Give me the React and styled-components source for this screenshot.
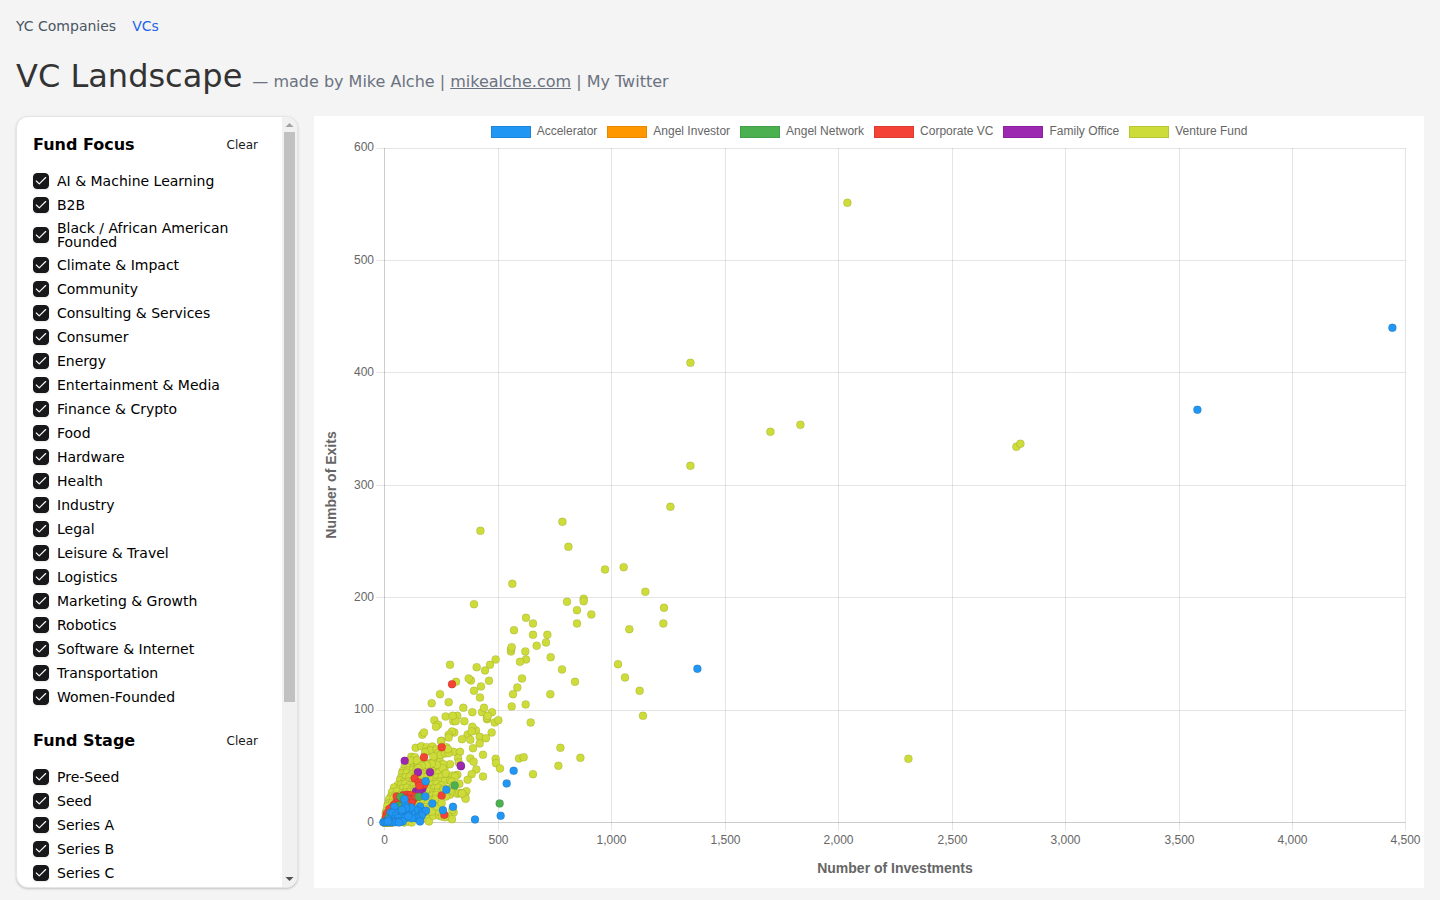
import React, { useState } from "react";
import styled, { createGlobalStyle } from "styled-components";
import { Check } from "lucide-react";

const focusOptions = [
    'AI & Machine Learning', 'B2B', 'Black / African American Founded', 'Climate & Impact',
    'Community', 'Consulting & Services', 'Consumer', 'Energy', 'Entertainment & Media',
    'Finance & Crypto', 'Food', 'Hardware', 'Health', 'Industry', 'Legal', 'Leisure & Travel',
    'Logistics', 'Marketing & Growth', 'Robotics', 'Software & Internet', 'Transportation',
    'Women-Founded',
];

const stageOptions = ['Pre-Seed', 'Seed', 'Series A', 'Series B', 'Series C'];

// Dots come in three layers: the whole plot (1 unit = 1px), then two
// closer ones near the origin (3 units = 1px).
const layers = {
    far: 'translate(-313.6 -138.2)',
    mid: 'translate(116 421.8) scale(0.33333)',
    near: 'translate(56 501.8) scale(0.33333)',
};

const series = [
    {
        name: 'Accelerator',
        color: '#2196f3',
        far: '1392 328,1197 410,697 669',
        near: '431 393,410 431,392 528,315 539,249 501,229 450,219 511,187 491,167 424,166 470,73 501,62 518,68 520,85 520,78 528,70 540,60 545,150 500,143 512,160 518,168 513,155 528,140 535,150 545,130 530,135 510,125 520,115 512,123 503,110 525,100 520,95 530,105 535,105 495,108 505,96 510,103 478,125 535,115 530,85 535,90 545,80 545,98 545,75 547,55 540,66 547,40 547,45 547,58 547,50 547,87 548,54 545',
    },
    {
        name: 'Angel Investor',
        color: '#ff9800',
        near: '46 547,52 545',
    },
    {
        name: 'Angel Network',
        color: '#4caf50',
        near: '254 437,389 491,92 471,146 471,87 497,80 508,60 525,70 518,55 535,94 500',
    },
    {
        name: 'Corporate VC',
        color: '#f44336',
        near: '246 133,215 322,162 352,134 416,155 436,163 433,146 428,148 438,215 467,223 525,100 466,80 470,112 465,122 466,95 480,108 475,118 478,130 478,137 470,125 490,110 492,78 490,72 495,66 503,58 508,50 522,48 533',
    },
    {
        name: 'Family Office',
        color: '#9c27b0',
        near: '104 363,144 397,180 397,273 379,272 377,157 447,138 455,148 453',
    },
    {
        name: 'Venture Fund',
        color: '#cddc39',
        far: '847 203,690 363,770 432,800 425,690 466,670 507,562 522,568 547,480 531,1016 447,1020 444,908 759,560 748,558 766,580 758',
        mid: '525 29,581 22,646 96,247 72,132 133,411 126,461 117,461 124,441 151,484 164,441 191,702 144,700 191,598 208,288 174,309 191,252 211,309 225,352 225,348 248,320 258,243 275,243 268,245 262,286 275,288 299,270 306,362 292,396 329,435 366,564 313,585 353,629 393,639 468,197 299,180 315,140 322,165 332,60 315,78 366,123 362,116 356,177 363,153 380,132 393,150 413,30 403,5 430,56 427,276 356,262 383,249 403,245 440,287 434,361 403,302 488,100 444,127 457,156 457,162 444,186 457,47 470,82 468,70 484,77 484,68 468,103 484,171 478,171 474,173 468,194 488,205 481,13 481,24 495,18 501,73 518,66 515,56 525,138 512,127 501,113 524,125 515,185 518,149 531,168 535,96 538,121 540,34 543,56 533',
        near: '157 285,162 278,309 325,329 311,213 304,137 324,154 319,170 322,187 320,229 322,250 336,270 336,124 351,135 352,122 362,141 362,172 335,181 332,200 328,205 340,212 345,225 341,235 340,234 328,165 338,190 350,264 355,266 368,301 356,311 366,339 345,377 357,378 370,390 386,319 389,305 403,293 420,339 410,447 356,461 352,489 403,240 373,220 373,218 385,200 375,185 372,170 375,155 378,145 385,262 405,228 401,248 407,255 410,245 425,268 432,250 438,222 450,232 458,240 465,250 455,262 462,268 459,275 460,283 462,289 454,285 470,287 477,276 461,251 518,247 510,235 530,246 538,177 545,190 528,208 528,205 515,216 530,225 532,185 515,200 500,215 490,228 470,125 548,103 548',
    },
];

// [y, from x, to x] of the rows where the funds pile up
const pile = [
    [368, 118, 215], [380, 104, 225], [391, 98, 215], [402, 96, 232], [413, 92, 242], [424, 90, 250],
    [435, 83, 225], [446, 72, 235], [457, 66, 210], [468, 62, 200], [479, 57, 205], [490, 54, 185],
    [501, 52, 185], [512, 49, 180], [523, 47, 170], [534, 46, 180], [545, 45, 125],
];

const pileDots = pile.flatMap(([y, from, to], row) => {
    const dots = [];
    for (let x = from, i = 0; x <= to; x += 11 + ((i * 7 + row * 5) % 6), i++) {
        dots.push([x, y + ((i * 5 + row * 3) % 7) - 3]);
    }
    return dots;
});

// funds with no exits at all, stacked on the corner until their rims go dark
const cornerDots = Array.from({ length: 60 }, (_, i) => [43 + (i * 3) % 24, 548]);

const parse = (text) => text.split(',').map(pair => pair.split(' ').map(Number));

const GlobalStyle = createGlobalStyle`
    * {
        box-sizing: border-box;
    }

    body {
        margin: 0;
        background: #f4f4f4;
        font-family: "DejaVu Sans", sans-serif;
    }
`;

const Page = styled.div`
    display: flex;
    flex-direction: column;
    height: 100vh;
    padding: 16px 16px 12px;
`;

const Nav = styled.nav`
    display: flex;
    gap: 16px;
    font-size: 14px;
    line-height: 20px;
`;

const NavLink = styled.a`
    color: ${props => props.$active ? '#2563eb' : '#4b5563'};
    text-decoration: none;
`;

const Header = styled.header`
    display: flex;
    align-items: baseline;
    gap: 10px;
    margin: 20px 0;
`;

const Title = styled.h1`
    margin: 0;
    color: #333;
    font-size: 32px;
    font-weight: 400;
    line-height: 40px;
`;

const Byline = styled.span`
    color: #6b7280;
    font-size: 16px;
`;

const BylineLink = styled.a`
    color: inherit;
    text-decoration: ${props => props.$underlined ? 'underline' : 'none'};
`;

const Main = styled.main`
    display: grid;
    grid-template-columns: 282px minmax(0, 1fr);
    grid-template-rows: minmax(0, 1fr);
    gap: 16px;
    flex: 1;
    min-height: 0;
`;

const Sidebar = styled.aside`
    display: flex;
    overflow: hidden;
    background: #fff;
    border: 1px solid #e5e5e5;
    border-radius: 12px;
    box-shadow: 0 1px 3px rgba(0, 0, 0, 0.1), 0 1px 2px rgba(0, 0, 0, 0.1);
`;

const Filters = styled.div`
    display: flex;
    flex: 1;
    flex-direction: column;
    gap: 24px;
    padding: 16px 16px 0;
    overflow-y: auto;
    scrollbar-width: none;
`;

const Scrollbar = styled.div`
    display: flex;
    flex: none;
    flex-direction: column;
    width: 15px;
    background: #f1f1f1;
`;

const ScrollArrow = styled.svg`
    flex: none;
    width: 15px;
    height: 15px;
    fill: ${props => props.$disabled ? '#a3a3a3' : '#505050'};
`;

const ScrollTrack = styled.div`
    flex: 1;
    padding: 0 2px;
`;

const ScrollThumb = styled.div`
    height: 77%;
    background: #c1c1c1;
`;

const GroupHeader = styled.div`
    display: flex;
    align-items: center;
    justify-content: space-between;
    height: 24px;
    margin-bottom: 16px;
`;

const GroupTitle = styled.h2`
    margin: 0;
    font-size: 16px;
    line-height: 24px;
`;

const ClearButton = styled.button`
    padding: 0 8px;
    border: 0;
    background: none;
    color: #18181b;
    font-family: inherit;
    font-size: 12px;
    line-height: 24px;
    cursor: pointer;
`;

const Options = styled.div`
    display: flex;
    flex-direction: column;
    gap: 8px;
`;

const Option = styled.label`
    display: flex;
    align-items: center;
    gap: 8px;
    min-height: 16px;
    font-size: 14px;
    line-height: 14px;
`;

const Tick = styled.span`
    display: grid;
    flex: none;
    place-items: center;
    width: 16px;
    height: 16px;

    input, svg {
        grid-area: 1 / 1;
    }

    svg {
        color: #fafafa;
        pointer-events: none;
    }
`;

const Checkbox = styled.input`
    appearance: none;
    width: 16px;
    height: 16px;
    margin: 0;
    border: 1px solid #18181b;
    border-radius: 4px;
    box-shadow: 0 1px 2px rgba(0, 0, 0, 0.1);

    &:checked {
        background: #18181b;
    }
`;

const ChartCard = styled.section`
    display: flex;
    flex-direction: column;
    padding-top: 10px;
    background: #fff;
    font-family: "Liberation Sans", Arial, sans-serif;
`;

const Legend = styled.div`
    display: flex;
    justify-content: center;
    gap: 10px;
    color: #666;
    font-size: 12px;
    line-height: 10px;
`;

const LegendItem = styled.span`
    display: flex;
    gap: 6px;
`;

const Swatch = styled.span`
    width: 40px;
    height: 12px;
    border: 1px solid rgba(0, 0, 0, 0.1);
    background: ${props => props.$color};
`;

const Plot = styled.svg`
    flex: 1;
    width: 100%;
    min-height: 0;

    line {
        stroke: rgba(0, 0, 0, 0.1);
    }

    circle {
        stroke: rgba(0, 0, 0, 0.1);
    }
`;

const TickLabel = styled.text`
    fill: #666;
    font-size: 12px;
`;

const AxisTitle = styled.text`
    fill: #666;
    font-size: 14px;
    font-weight: 700;
    text-anchor: middle;
`;

const FilterGroup = ({ title, options }) => {
    const [selected, setSelected] = useState(options);

    const toggle = (option) => {
        setSelected(selected.includes(option)
            ? selected.filter(item => item !== option)
            : [...selected, option]);
    };

    return (
        <div>
            <GroupHeader>
                <GroupTitle>{title}</GroupTitle>
                <ClearButton type="button" onClick={() => setSelected([])}>Clear</ClearButton>
            </GroupHeader>
            <Options>
                {options.map(option => (
                    <Option key={option}>
                        <Tick>
                            <Checkbox
                                type="checkbox"
                                checked={selected.includes(option)}
                                onChange={() => toggle(option)}
                            />
                            {selected.includes(option) && <Check size={14} />}
                        </Tick>
                        {option}
                    </Option>
                ))}
            </Options>
        </div>
    );
};

const Dots = ({ points, layer, color }) => {
    const unit = layer === 'far' ? 1 : 3;
    return (
        <g transform={layers[layer]} fill={color} strokeWidth={unit}>
            {points.map(([x, y], i) => <circle key={i} cx={x} cy={y} r={4 * unit} />)}
        </g>
    );
};

const left = 70.4;
const right = 1091.4;
const top = 10;
const bottom = 684.5;

const ScatterPlot = () => {
    const xTicks = Array.from({ length: 10 }, (_, i) => i * 500);
    const yTicks = Array.from({ length: 7 }, (_, i) => i * 100);

    return (
        <Plot viewBox="0 0 1110 750" role="img" aria-label="Number of exits by number of investments">
            {xTicks.map((value, i) => {
                const x = Math.round(left + (right - left) * i / 9) + 0.5;
                return (
                    <g key={value}>
                        <line x1={x} x2={x} y1={top} y2={bottom + 8} />
                        <TickLabel x={x} y={706} textAnchor="middle">{value.toLocaleString('en-US')}</TickLabel>
                    </g>
                );
            })}
            {yTicks.map((value, i) => {
                const y = bottom - (bottom - top) * i / 6;
                const lineY = Math.floor(y) + 0.5;
                return (
                    <g key={value}>
                        <line x1={left - 8} x2={right} y1={lineY} y2={lineY} />
                        <TickLabel x={60} y={Math.round(y + 3.4)} textAnchor="end">{value}</TickLabel>
                    </g>
                );
            })}
            <line x1={70.5} x2={70.5} y1={top} y2={bottom} />
            <line x1={left} x2={right} y1={bottom} y2={bottom} />
            <AxisTitle x={581} y={735}>Number of Investments</AxisTitle>
            <AxisTitle transform="translate(22 347) rotate(-90)">Number of Exits</AxisTitle>

            <Dots points={pileDots} layer="near" color="#cddc39" />
            <Dots points={cornerDots} layer="near" color="#cddc39" />
            {[...series].reverse().map(item => (
                <g key={item.name}>
                    {['far', 'mid', 'near'].filter(layer => item[layer]).map(layer => (
                        <Dots key={layer} points={parse(item[layer])} layer={layer} color={item.color} />
                    ))}
                </g>
            ))}
        </Plot>
    );
};

export default function App() {
    return (
        <Page>
            <GlobalStyle />
            <Nav>
                <NavLink href="#companies">YC Companies</NavLink>
                <NavLink href="#vcs" $active>VCs</NavLink>
            </Nav>
            <Header>
                <Title>VC Landscape</Title>
                <Byline>
                    — made by Mike Alche | <BylineLink href="#site" $underlined>mikealche.com</BylineLink> | <BylineLink href="#twitter">My Twitter</BylineLink>
                </Byline>
            </Header>
            <Main>
                <Sidebar>
                    <Filters>
                        <FilterGroup title="Fund Focus" options={focusOptions} />
                        <FilterGroup title="Fund Stage" options={stageOptions} />
                    </Filters>
                    <Scrollbar aria-hidden="true">
                        <ScrollArrow viewBox="0 0 15 15" $disabled>
                            <path d="M3.5 10 7.5 6l4 4z" />
                        </ScrollArrow>
                        <ScrollTrack>
                            <ScrollThumb />
                        </ScrollTrack>
                        <ScrollArrow viewBox="0 0 15 15">
                            <path d="M3.5 5h8l-4 4z" />
                        </ScrollArrow>
                    </Scrollbar>
                </Sidebar>
                <ChartCard>
                    <Legend>
                        {series.map(item => (
                            <LegendItem key={item.name}>
                                <Swatch $color={item.color} />
                                {item.name}
                            </LegendItem>
                        ))}
                    </Legend>
                    <ScatterPlot />
                </ChartCard>
            </Main>
        </Page>
    );
}
